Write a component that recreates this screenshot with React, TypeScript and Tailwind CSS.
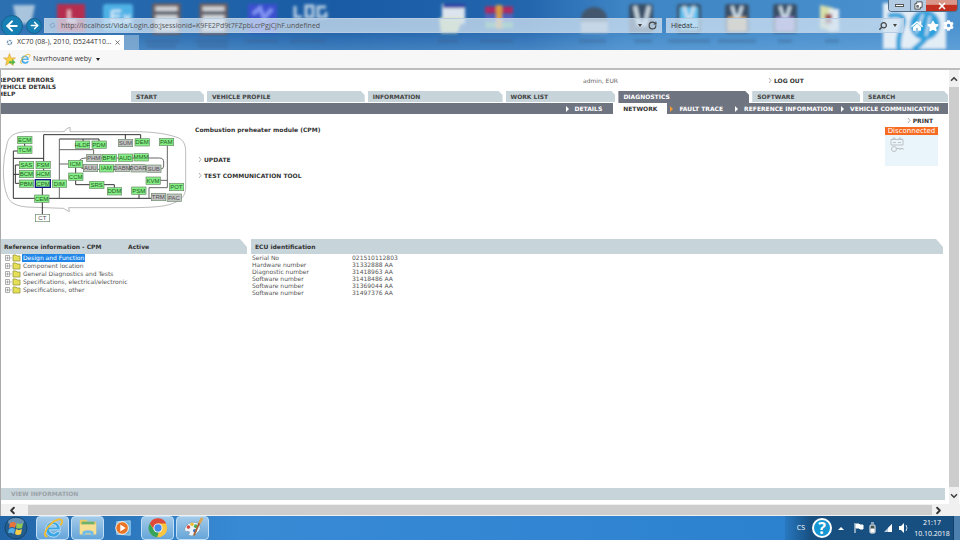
import { FaHome, FaStar, FaCog, FaSearch } from "react-icons/fa"
import { ArrowLeft, ArrowRight, RotateCw, X, ChevronUp, ChevronDown, ChevronLeft, ChevronRight } from "lucide-react"

const tabs = [
    { name: "START", size: "flex-[68]" },
    { name: "VEHICLE PROFILE", size: "flex-[153]" },
    { name: "INFORMATION", size: "flex-[130]" },
    { name: "WORK LIST", size: "flex-[105]" },
    { name: "DIAGNOSTICS", size: "flex-[126]", active: true },
    { name: "SOFTWARE", size: "flex-[103]" },
    { name: "SEARCH", size: "flex-[80]" },
]

const ecuRows = [
    ["Serial No", "021510112803"],
    ["Hardware number", "31332888 AA"],
    ["Diagnostic number", "31418963 AA"],
    ["Software number", "31418486 AA"],
    ["Software number", "31369044 AA"],
    ["Software number", "31497376 AA"],
]

const tree = [
    "Design and Function",
    "Component location",
    "General Diagnostics and Tests",
    "Specifications, electrical/electronic",
    "Specifications, other",
]

const GREEN = "#86ee86"
const GRAY = "#c3c3c3"

const modules: [string, number, number, string][] = [
    ["ECM", 53, 49, GREEN], ["TCM", 53, 78, GREEN], ["SAS", 58, 124, GREEN], ["FSM", 108, 124, GREEN],
    ["BCM", 58, 151, GREEN], ["HCM", 108, 151, GREEN], ["PBM", 58, 180, GREEN], ["DIM", 157, 180, GREEN],
    ["CEM", 104, 225, GREEN], ["CT", 106, 283, "#ffffff"], ["HLDF", 226, 63, GREEN], ["PDM", 276, 63, GREEN],
    ["SUM", 355, 58, GRAY], ["DEM", 405, 56, GREEN], ["PAM", 478, 55, GREEN], ["PHM", 260, 103, GRAY],
    ["BPM", 306, 103, GREEN], ["AUD", 355, 102, GREEN], ["MMM", 402, 101, GREEN], ["ICM", 205, 121, GREEN],
    ["AUU", 250, 133, GRAY], ["IAM", 298, 134, GREEN], ["DABM", 345, 133, GRAY], ["ROAR", 393, 134, GRAY],
    ["SUB", 440, 135, GRAY], ["CCM", 206, 159, GREEN], ["SRS", 269, 184, GREEN], ["DDM", 322, 203, GREEN],
    ["PSM", 395, 201, GREEN], ["KVM", 438, 171, GREEN], ["POT", 508, 190, GREEN], ["TRM", 454, 220, GRAY],
    ["PAC", 501, 222, GRAY],
]

function NetworkMap()
{
    return(
        <svg viewBox="0 0 600 330" className="h-[110px] w-[200px] shrink-0" aria-label="Vehicle network">
            <path d="M186 35 H75 C42 38 28 48 22 68 Q10 110 10 150 Q10 200 22 228 C30 250 50 258 80 261 L190 265 L208 275 L206 263 H400 C450 262 500 262 530 245 C550 234 557 222 557 200 V95 C557 70 548 57 528 51 C490 38 440 35 400 35 H210 V22 Q198 24 194 34 Z" fill="none" stroke="#999" strokeWidth="2" strokeLinejoin="round" />
            <g fill="none" stroke="#333" strokeWidth="3">
                <path d="M422 58V44H131V124M376 58V44" />
                <path d="M55 93H40V235H454M40 115H131M58 135H46V190H58M40 163H58M74 70V80" />
                <path d="M131 144V153M127 200V225M127 246V284" />
                <path d="M227 142V160M227 180V194H270M310 194H343V204M417 222V235" />
                <path d="M297 64V57H178M249 57V64" />
            </g>
            <g fill="none" stroke="#666" strokeWidth="3">
                <path d="M178 57V235M178 89H281V104M178 132H206" />
                <path d="M502 76V203H447V235M480 181H502" />
                <path d="M238 122Q242 114 260 114H444H478Q491 114 491 126V138Q491 148 480 148H254Q240 146 238 134" />
            </g>
            <g fontFamily="Liberation Sans, Arial, sans-serif" fontSize="18" textAnchor="middle">
                {modules.map(([name, x, y, color]) => (
                    <g key={name}>
                        <rect x={x} y={y} width="43" height="22" fill={color} stroke="#6b8b6b" strokeWidth="2" />
                        <text x={x + 21} y={y + 17} fill={color === GREEN ? "#1f5a1f" : "#505050"}>{name}</text>
                    </g>
                ))}
                <rect x="106" y="179" width="45" height="23" fill={GREEN} stroke="#15158a" strokeWidth="4" />
                <text x="129" y="197" fill="#1f5a1f">CPM</text>
            </g>
        </svg>
    )
}

function DesktopBehindGlass()
{
    return(
        <svg viewBox="0 0 960 50" preserveAspectRatio="xMidYMin slice" className="absolute inset-0 h-full w-full" aria-hidden="true">
            <defs>
                <linearGradient id="glass" x1="0" x2="1">
                    <stop offset="0" stopColor="#2d70b2" />
                    <stop offset=".35" stopColor="#195ba4" />
                    <stop offset=".55" stopColor="#2466ae" />
                    <stop offset=".65" stopColor="#3e85c5" />
                    <stop offset="1" stopColor="#4b92cf" />
                </linearGradient>
                <linearGradient id="fade" x1="0" x2="0" y1="0" y2="1">
                    <stop offset=".5" stopColor="#7ab3e3" stopOpacity="0" />
                    <stop offset="1" stopColor="#7ab3e3" stopOpacity=".4" />
                </linearGradient>
                <filter id="soft"><feGaussianBlur stdDeviation="1.5" /></filter>
            </defs>
            <rect width="960" height="50" fill="url(#glass)" />
            <rect width="960" height="50" fill="url(#fade)" />
            <g filter="url(#soft)">
                <path d="M13 5H35L31 24H17Z" fill="#a9c5dd" />
                <rect x="57" y="4" width="28" height="28" fill="#b52f50" />
                <path d="M69 10V21H76" stroke="#f0c8d0" strokeWidth="3" fill="none" />
                <rect x="103" y="4" width="30" height="27" rx="3" fill="#4fb2e6" />
                <path d="M112 11H121M112 16H120M112 22H121M112 11V22M124 15L130 23M130 15L124 23" stroke="#d8f0fb" strokeWidth="2" />
                <g fill="#d2d6da" stroke="#775f58" strokeWidth="3">
                    <rect x="154" y="5" width="25" height="28" />
                    <rect x="201" y="5" width="25" height="28" />
                </g>
                <path d="M155 13H179M202 13H226" stroke="#555a68" strokeWidth="4" />
                <rect x="248" y="4" width="29" height="29" fill="#3b50cf" />
                <path d="M253 14L260 8L264 18L272 9" stroke="#8093f2" strokeWidth="4" fill="none" />
                <path d="M295 6V17H302M306 6H313V17H306ZM326 7H318V17H326V12" stroke="#b8cfe3" strokeWidth="3" fill="none" />
                <rect x="442" y="4" width="23" height="20" fill="#dce4ee" />
                <path d="M443 6H465" stroke="#3642a4" strokeWidth="4" />
                <path d="M439 18L464 18L457 33H441Z" fill="#dfdf9d" />
                <path d="M485 10H513" stroke="#b02c61" strokeWidth="7" />
                <path d="M485 18H513" stroke="#5260bd" strokeWidth="6" />
                <path d="M485 25H513" stroke="#58ae83" strokeWidth="6" />
                <path d="M499 5V29" stroke="#d99b42" strokeWidth="6" />
                <ellipse cx="594" cy="19" rx="13" ry="12" fill="#42566d" />
                <path d="M581 22H608V33H581Z" fill="#9fb3c5" />
                <g fill="#385067">
                    <rect x="629" y="4" width="24" height="29" rx="3" />
                    <rect x="677" y="4" width="24" height="29" rx="3" />
                    <rect x="725" y="4" width="24" height="29" rx="3" />
                    <rect x="773" y="4" width="24" height="29" rx="3" />
                </g>
                <path d="M635 6L639 24H645L649 6" stroke="#cbd8e2" strokeWidth="4" fill="none" />
                <path d="M680 7H698V30H680Z" fill="#62c0f0" />
                <path d="M728 17H746V31H728Z" fill="#d7b178" />
                <path d="M776 17H794V31H776Z" fill="#9f8cd1" />
                <path d="M684 6L687 17H691L694 6M732 6L735 16H739L742 6M780 6L783 16H787L790 6" stroke="#d1e1ed" strokeWidth="3" fill="none" />
                <path d="M820 5L834 8V32L820 28Z" fill="#d8dfaa" />
                <path d="M829 9H839V31L829 32Z" fill="#e3eaf0" />
                <path d="M825 14H832V24H825Z" fill="#9d4d50" />
                <path d="M145 41H180M195 41H229M245 41H278M290 41H325M147 46H176M198 46H228M438 41H458M480 41H513M579 41H606M634 41H652M668 41H710M718 41H756M778 41H792M825 41H839" stroke="#355e87" strokeWidth="3" opacity=".4" />
                <rect x="883" y="3" width="63" height="46" fill="#e3edf6" />
                <circle cx="925" cy="25" r="15" fill="#2ca1dc" />
                <path d="M888 16Q906 12 903 24Q897 39 899 50M929 34Q923 43 913 50" stroke="#2ca1dc" strokeWidth="5" fill="none" />
                <path d="M923 14L916 33M930 16L926 36" stroke="#e3edf6" strokeWidth="2" />
            </g>
        </svg>
    )
}

function IeLogo({ className }: { className: string })
{
    return(
        <svg viewBox="0 0 24 24" className={className} aria-hidden="true">
            <path d="M20 14H8Q9 18 13 18Q15 18 16 16H20Q18 22 12 22Q4 21 4 13Q5 5 12 5Q20 6 20 14ZM8 11H16Q15 8 12 8Q9 8 8 11Z" fill="#3ca6e5" stroke="#e6f5ff" strokeWidth=".7" fillRule="evenodd" />
            <path d="M6 21C1 22 3 14 9 8C15 2 22 1 22 5C22 6 21 8 20 9" fill="none" stroke="#f0bd34" strokeWidth="2" />
        </svg>
    )
}

function PageIcon({ className }: { className: string })
{
    return <svg viewBox="0 0 10 10" className={className} aria-hidden="true"><circle cx="5" cy="5" r="3" fill="none" stroke="#7295b3" strokeWidth="2" strokeDasharray="3 1" /></svg>
}

function Browser()
{
    return(
        <header className="relative h-[50px] shrink-0 overflow-hidden font-['Open_Sans',sans-serif]">
            <DesktopBehindGlass />
            <div className="relative flex h-full flex-col justify-end">
                <div className="flex h-[17px] items-center pr-[6px]">
                    <button aria-label="Back" className="ml-px flex size-[22px] shrink-0 items-center justify-center rounded-full border border-[#1a6291] bg-[#167fb4] text-white"><ArrowLeft size={16} strokeWidth={3} /></button>
                    <button aria-label="Forward" className="ml-[3px] flex size-4 shrink-0 items-center justify-center rounded-full border border-[#1a6291] bg-[#167fb4] text-white"><ArrowRight size={11} strokeWidth={3} /></button>
                    <div className="ml-[2px] flex h-[15px] flex-[617] items-center border border-[#b5cce3] bg-[#d3e3f2]/75 pr-1 text-[#444]">
                        <PageIcon className="ml-1 size-[7px] opacity-60" />
                        <input aria-label="Address" defaultValue="http://localhost/Vida/Login.do;jsessionid=K9FE2Pd9t7FZpbLcrPgjCJhF.undefined" className="ml-[5px] min-w-0 flex-1 bg-transparent text-[7px] leading-3 text-[#555] outline-none" />
                        <button aria-label="Address history" className="mr-[6px] border-x-2 border-t-3 border-x-transparent border-t-[#444]"></button>
                        <button aria-label="Refresh"><RotateCw size={9} strokeWidth={3} /></button>
                    </div>
                    <div className="ml-1 flex h-[15px] flex-[238] items-center border border-[#b5cce3] bg-[#d3e3f2]/75 text-[#444]">
                        <input aria-label="Search" placeholder="Hledat..." className="ml-1 min-w-0 flex-1 bg-transparent text-[7px] leading-3 outline-none placeholder:text-[#333]" />
                        <button aria-label="Find" className="-scale-x-100"><FaSearch size={8} /></button>
                        <button aria-label="Search options" className="mx-[6px] border-x-2 border-t-3 border-x-transparent border-t-[#444]"></button>
                    </div>
                    <div className="ml-[7px] flex gap-1 text-white">
                        <button aria-label="Home"><FaHome size={12} /></button>
                        <button aria-label="Favorites"><FaStar size={12} /></button>
                        <button aria-label="Tools"><FaCog size={11} /></button>
                    </div>
                </div>
                <div className="mt-px flex h-[15px]">
                    <div className="flex w-[124px] items-center bg-white pl-[6px] text-[7px] text-[#333]">
                        <PageIcon className="mr-1 size-[7px]" />
                        <span className="whitespace-nowrap">XC70 (08-), 2010, D5244T10...</span>
                        <button aria-label="Close tab" className="ml-auto mr-[3px] text-[#666]"><X size={7} strokeWidth={3} /></button>
                    </div>
                    <button aria-label="New tab" className="w-[15px] bg-[#86afd5]/80"></button>
                </div>
            </div>
            <div className="absolute top-0 right-[2px] flex h-3 overflow-hidden rounded-b-sm border border-t-0 border-[#526d88] text-[#444]">
                <button aria-label="Minimize" className="flex w-[22px] items-center justify-center border-r border-[#6883a0] bg-[#b4cce3]"><span className="h-[3px] w-[9px] border border-[#555] bg-white"></span></button>
                <button aria-label="Restore" className="flex w-[15px] items-center justify-center bg-[#b4cce3]">
                    <svg viewBox="0 0 10 10" className="size-[9px]"><path d="M3 1H9V7H7V9H1V3H3Z" fill="#fff" stroke="#444" /><path d="M3 5H5V7H3Z" fill="#7898b9" stroke="#444" strokeWidth=".7" /></svg>
                </button>
                <button aria-label="Close" className="flex w-[31px] items-center justify-center bg-linear-to-b from-[#da9789] from-40% to-[#c2301f] to-45% text-white"><X size={10} strokeWidth={4} /></button>
            </div>
        </header>
    )
}

function Tray()
{
    return(
        <div className="flex h-full items-center bg-linear-to-r from-[#2878c0] to-[#174f80] to-15% pl-3 text-white">
            <span className="text-[7px]">CS</span>
            <button aria-label="Help" className="ml-[7px] flex size-5 items-center justify-center rounded-full border-2 border-white bg-[#1696d3] text-[16px] leading-4 font-bold">?</button>
            <button aria-label="Hidden icons" className="ml-[6px] border-x-3 border-b-3 border-x-transparent border-b-white"></button>
            <svg viewBox="0 0 62 12" className="ml-[7px] h-3 w-[62px]">
                <path d="M4 1V11M5 2H8L9 3H12V7H9L8 6H5Z" fill="#fff" stroke="#fff" />
                <rect x="19" y="3" width="5" height="8" rx="1" fill="#455" stroke="#fff" /><path d="M20 1H23M20 7H23V10H20Z" fill="#fff" stroke="#fff" />
                <path d="M33 10L41 2V10Z" fill="#b9cbdc" /><path d="M37 10V6L41 2V10Z" fill="#fff" />
                <path d="M48 4H50L53 1V11L50 8H48Z" fill="#fff" /><path d="M55 3Q57 6 55 9" fill="none" stroke="#c6dbed" />
            </svg>
            <div className="w-[38px] text-center text-[7px] leading-[11px] whitespace-nowrap">
                <div>21:17</div>
                <div>10.10.2018</div>
            </div>
            <button aria-label="Show desktop" className="ml-[2px] h-full w-[7px] border-l border-[#123e68] bg-[#4b80af]"></button>
        </div>
    )
}

function Taskbar()
{
    const frame = "flex h-6 w-[33px] items-center justify-center rounded-sm border border-[#c0def5] bg-linear-to-b from-[#a2cae9] to-[#65a5d9]"
    return(
        <footer className="flex h-6 shrink-0 items-center justify-between bg-linear-to-r from-[#2165a6] via-[#388ad5] via-25% to-[#287fcd] font-['Open_Sans',sans-serif]">
            <div className="flex items-center gap-[2px]">
                <button aria-label="Start" className="mr-[6px] ml-1">
                    <svg viewBox="0 0 24 24" className="size-6">
                        <circle cx="12" cy="12" r="11" fill="#235d8e" stroke="#17466f" />
                        <ellipse cx="12" cy="6" rx="8" ry="4" fill="#86a9c5" opacity=".7" />
                        <path d="M6 7Q9 5 12 7L11 12Q8 10 5 12Z" fill="#e8743c" />
                        <path d="M13 7Q16 9 19 7L18 12Q15 13 12 12Z" fill="#91c952" />
                        <path d="M5 13Q8 11 11 13L10 18Q7 16 4 17Z" fill="#51aee6" />
                        <path d="M12 13Q15 15 18 13L17 18Q14 20 11 18Z" fill="#f7cc49" />
                    </svg>
                </button>
                <button aria-label="Internet Explorer" className={frame}><IeLogo className="size-[22px]" /></button>
                <button aria-label="Explorer" className={frame}>
                    <svg viewBox="0 0 24 22" className="h-5 w-[22px]">
                        <path d="M3 2H10L12 4H21V18H3Z" fill="#eac968" /><path d="M5 4H19V8H5Z" fill="#6cb26c" /><path d="M3 7H21V18H3Z" fill="#f6df93" />
                        <path d="M6 20V15Q12 12 18 15V20H15V17H9V20Z" fill="#71bbe8" />
                    </svg>
                </button>
                <button aria-label="Media Player" className="flex w-[33px] items-center justify-center">
                    <svg viewBox="0 0 20 20" className="size-[18px]">
                        <path d="M3 3L18 2V18L3 17Z" fill="#69b2df" stroke="#a5d5ef" /><circle cx="9" cy="10" r="7" fill="#e97524" stroke="#fff" strokeWidth="1" /><path d="M7 6L13 10L7 14Z" fill="#fff" />
                    </svg>
                </button>
                <button aria-label="Chrome" className={frame}>
                    <svg viewBox="0 0 24 24" className="size-[22px]">
                        <circle cx="12" cy="12" r="10" fill="#fbc63f" />
                        <path d="M3 7A10 10 0 0 1 21 7H12L8 14Z" fill="#df4939" /><path d="M3 7L8 15L13 16L11 22A10 10 0 0 1 3 7Z" fill="#37a45b" />
                        <circle cx="12" cy="12" r="5" fill="#fff" /><circle cx="12" cy="12" r="4" fill="#4389ec" />
                    </svg>
                </button>
                <button aria-label="Paint" className={frame}>
                    <svg viewBox="0 0 24 24" className="size-[22px]">
                        <path d="M4 10Q10 3 18 7Q23 13 16 18Q10 23 7 19Q10 15 5 16Q1 15 4 10Z" fill="#edf3fa" stroke="#7da1be" />
                        <circle cx="7" cy="11" r="2" fill="#d44b3c" /><circle cx="11" cy="8" r="2" fill="#eabf37" /><circle cx="15" cy="10" r="2" fill="#50aa55" /><circle cx="14" cy="15" r="2" fill="#3570c4" />
                        <path d="M13 20L20 4" stroke="#aa642f" strokeWidth="2" /><path d="M19 7L22 1" stroke="#dba858" strokeWidth="3" />
                    </svg>
                </button>
            </div>
            <Tray />
        </footer>
    )
}

function SubLink({ name }: { name: string })
{
    return(
        <a href="#" className="flex items-center gap-[6px]">
            <span className="border-y-3 border-l-3 border-y-transparent border-l-current"></span>
            {name}
        </a>
    )
}

function ActionLink({ name }: { name: string })
{
    return(
        <a href="#" className="flex items-center gap-[2px] font-bold text-[#333]">
            <svg viewBox="0 0 4 7" className="h-[7px] w-1"><path d="M1 1L3 3.5L1 6" fill="none" stroke="#999" strokeWidth=".8" /></svg>
            {name}
        </a>
    )
}

export default function App()
{
    return(
        <div className="flex h-screen flex-col overflow-hidden bg-white">
            <Browser />
            <div className="flex h-[20px] shrink-0 items-center border-b-2 border-[#bdbdbd] bg-[#f7f7f7] pl-[3px] font-['Open_Sans',sans-serif] text-[7px] text-[#333]">
                <svg viewBox="0 0 24 24" className="size-[13px]"><path d="M12 1L15 9L23 9L17 14L19 23L12 18L5 23L7 14L1 9H9Z" fill="#f9cf43" stroke="#d5952f" /><path d="M11 15H17V11L23 17L17 22V19H11Z" fill="#53b948" /></svg>
                <div className="ml-[3px] flex w-3 items-center justify-center"><IeLogo className="size-3" /></div>
                <button className="ml-[2px] flex items-center gap-1">Navrhované weby <span className="border-x-2 border-t-3 border-x-transparent border-t-[#222]"></span></button>
            </div>

            <div className="flex min-h-0 flex-1 border-l border-[#aaa] font-['DejaVu_Sans',Verdana,sans-serif] text-[6px] leading-[7px] text-[#555]">
                <main className="flex min-w-0 flex-1 flex-col overflow-hidden">
                    <div className="flex h-[21px] pt-[6px] font-bold text-[#333]">
                        <nav className="-ml-[3px] flex w-[585px] flex-col">
                            <a href="#">REPORT ERRORS</a>
                            <a href="#">VEHICLE DETAILS</a>
                            <a href="#">HELP</a>
                        </nav>
                        <div className="w-[185px] pt-px font-normal text-[#666]">admin, EUR</div>
                        <div className="pt-px"><ActionLink name="LOG OUT" /></div>
                    </div>
                    <nav className="mr-px ml-[130px] flex h-3 gap-[3px] font-bold">
                        {tabs.map((tab) => (
                            <a key={tab.name} href="#" className={`${tab.size} ${tab.active ? "bg-[#6f7481] text-white" : "border-b border-white bg-[#c7d4da] text-[#444]"} pl-[5px] leading-3 whitespace-nowrap [clip-path:polygon(0_0,calc(100%_-_4px)_0,100%_4px,100%_100%,0_100%)]`}>{tab.name}</a>
                        ))}
                    </nav>
                    <nav className="mr-px flex h-[11px] shrink-0 items-stretch justify-end bg-[#6f7481] pr-[9px] font-bold whitespace-nowrap text-white">
                        <SubLink name="DETAILS" />
                        <a href="#" className="ml-[11px] bg-white px-[10px] leading-[11px] text-[#333]">NETWORK</a>
                        <span className="mt-[3px] ml-[3px] h-[6px] border-y-3 border-l-3 border-y-transparent border-l-[#f29a38]"></span>
                        <a href="#" className="ml-[6px] leading-[11px]">FAULT TRACE</a>
                        <div className="ml-3 flex gap-2">
                            <SubLink name="REFERENCE INFORMATION" />
                            <SubLink name="VEHICLE COMMUNICATION" />
                        </div>
                    </nav>

                    <section className="flex h-[125px] shrink-0 pr-[11px]">
                        <div className="-ml-px w-[195px] shrink-0 pt-[6px]"><NetworkMap /></div>
                        <div className="flex flex-1 flex-col items-start pt-3">
                            <h1 className="font-bold text-[#333]">Combustion preheater module (CPM)</h1>
                            <div className="mt-[23px] ml-[3px] flex flex-col gap-[9px]">
                                <ActionLink name="UPDATE" />
                                <ActionLink name="TEST COMMUNICATION TOOL" />
                            </div>
                        </div>
                        <div className="flex w-[53px] flex-col pt-[3px]">
                            <div className="mr-[5px] flex justify-end"><ActionLink name="PRINT" /></div>
                            <div className="mt-[3px] bg-[#f76b22] text-center text-[7px] leading-2 text-white">Disconnected</div>
                            <div className="h-[31px] bg-[#eaf5fb] pt-[2px] pl-[5px]">
                                <svg viewBox="0 0 14 16" className="h-4 w-[14px]" fill="none" stroke="#bfc3c8">
                                    <path d="M1 2.5H13V8H1ZM3 2.5V1H5V2.5M9 2.5V1H11V2.5" />
                                    <path d="M3 5.5H6M8 5.5H11" />
                                    <circle cx="4" cy="12" r="2.5" /><path d="M6 11.5H13V13M10 11.5V13" />
                                </svg>
                            </div>
                        </div>
                    </section>

                    <section className="flex min-h-0 flex-1 gap-1 pr-[6px]">
                        <div className="w-[246px] shrink-0">
                            <h2 className="flex bg-[#c7d4da] pl-[3px] leading-[15px] font-bold text-[#333] [clip-path:polygon(0_0,calc(100%_-_7px)_0,100%_8px,100%_100%,0_100%)]"><span className="w-[124px]">Reference information - CPM</span>Active</h2>
                            <ul>
                                {tree.map((item, i) => (
                                    <li key={item} className="flex h-2 items-center pl-[3px]">
                                        <svg viewBox="0 0 17 8" className="mr-px h-2 w-[17px]">
                                            <path d="M1.5 1.5H5.5V6.5H1.5ZM2 4H5M3.5 2.5V5.5" fill="none" stroke="#999" strokeWidth=".8" />
                                            <path d="M6 4H8" stroke="#aaa" strokeWidth=".8" />
                                            <path d="M9 1H12L13 2H16V7H9Z" fill="#e5df55" stroke="#9b9742" strokeWidth=".8" />
                                        </svg>
                                        <button className={i === 0 ? "bg-[#2187e8] px-px leading-2 text-white" : "px-px leading-2"}>{item}</button>
                                    </li>
                                ))}
                            </ul>
                        </div>
                        <div className="min-w-0 flex-1">
                            <h2 className="bg-[#c7d4da] pl-1 leading-[15px] font-bold text-[#333] [clip-path:polygon(0_0,calc(100%_-_7px)_0,100%_8px,100%_100%,0_100%)]">ECU identification</h2>
                            <table>
                                <tbody>
                                    {ecuRows.map(([label, value]) => (
                                        <tr key={value}>
                                            <th className="w-[101px] p-0 pl-px text-left font-normal">{label}</th>
                                            <td className="p-0">{value}</td>
                                        </tr>
                                    ))}
                                </tbody>
                            </table>
                        </div>
                    </section>
                    <div className="mr-1 mb-1 h-3 shrink-0 bg-[#c7d4da] pl-[10px] leading-3 font-bold text-[#9aa3a8]">VIEW INFORMATION</div>
                </main>
                <div className="mr-px flex w-[10px] shrink-0 flex-col items-center bg-[#f0f0f0] text-[#444]">
                    <button aria-label="Scroll up" className="h-[17px]"><ChevronUp size={10} strokeWidth={4} /></button>
                    <div className="w-full flex-1 bg-[#cdcdcd]"></div>
                    <button aria-label="Scroll down" className="h-[17px]"><ChevronDown size={10} strokeWidth={4} /></button>
                </div>
            </div>

            <div className="flex h-3 shrink-0 items-center border-l border-[#aaa] bg-[#f0f0f0] pr-[10px] text-[#333]">
                <button aria-label="Scroll left" className="flex w-[27px] justify-center pr-[5px]"><ChevronLeft size={11} strokeWidth={4} /></button>
                <div className="h-[10px] flex-1 bg-[#cdcdcd]"></div>
                <button aria-label="Scroll right" className="flex w-[18px] justify-center pr-[5px]"><ChevronRight size={11} strokeWidth={4} /></button>
            </div>
            <Taskbar />
        </div>
    )
}
